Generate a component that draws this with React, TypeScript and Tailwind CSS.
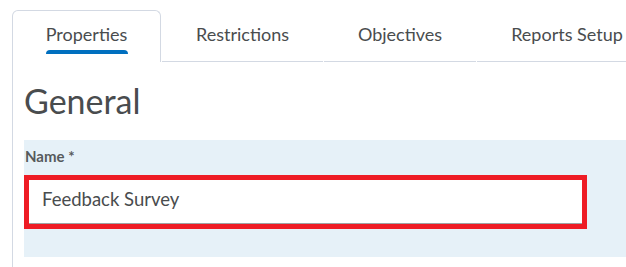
const TABS = [
  { label: 'Restrictions', width: 'w-[161px]' },
  { label: 'Objectives', width: 'w-[152px]' },
  { label: 'Reports Setup', width: 'w-[180px]' },
];

export default function App() {
  return (
    <div
      className="w-[626px] h-[267px] overflow-hidden bg-white pl-[12px] pt-[10px] text-[#494c4e]"
      style={{ fontFamily: 'Lato, "Open Sans", sans-serif' }}
    >
      {/* Tab strip */}
      <div className="flex h-[52px] w-[700px]">
        <div className="flex h-[52px] w-[149px] shrink-0 flex-col items-center rounded-t-[6px] border border-b-0 border-[#d3d9e3] pt-[12px]">
          <span className="text-[18px] leading-[22px]">Properties</span>
          <span className="mt-[5px] h-[4px] w-[82px] rounded-t-[4px] bg-[#006fbf]" />
        </div>
        {TABS.map((tab) => (
          <div
            key={tab.label}
            className={`ml-px flex h-[52px] shrink-0 justify-center border-b border-[#d3d9e3] pt-[13px] ${tab.width}`}
          >
            <span className="text-[18px] leading-[22px]">{tab.label}</span>
          </div>
        ))}
      </div>

      {/* Content */}
      <div className="flex h-[205px] flex-col border-l border-[#d3d9e3] pl-[11px]">
        <h1 className="mt-[19px] text-[34px] font-normal leading-[40px]">General</h1>

        <div className="mt-[19px] flex h-[117px] flex-col bg-[#e6f1f8] pt-[7px]">
          <label className="pl-[1px] text-[15px] font-bold leading-[18px] text-[#565a5c]">
            Name *
          </label>
          <div className="mt-[10px] h-[54px] w-[563px] border-[5px] border-[#ee1c25] bg-white">
            <div className="flex h-full items-start border-b border-[#9ea2a4] pl-[13px] pt-[8px]">
              <span className="text-[18.5px] leading-[22px] text-[#494c4e]">Feedback Survey</span>
            </div>
          </div>
        </div>
      </div>
    </div>
  );
}
